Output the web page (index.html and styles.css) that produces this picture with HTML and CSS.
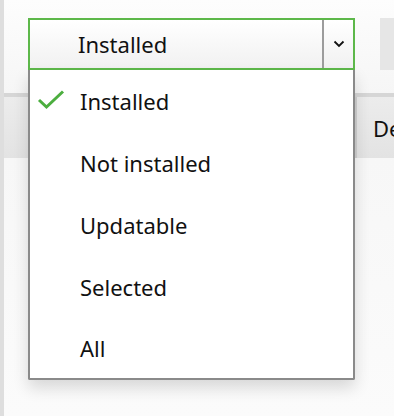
FILE: index.html
```html
<!DOCTYPE html>
<html lang="en">
<head>
  <meta charset="UTF-8">
  <title>Package Filter</title>
  <link rel="stylesheet" href="styles.css">
</head>
<body>
  <div class="sidebar"></div>
  <div class="content">
    <div class="toolbar">
      <div class="filter-select">
        <span class="select-value">Installed</span>
        <span class="select-arrow">
          <svg width="12" height="8" viewBox="0 0 12 8"><path d="M1.5 1.5 L6 6 L10.5 1.5" fill="none" stroke="#111" stroke-width="1.8"/></svg>
        </span>
      </div>
      <div class="toolbar-button"></div>
    </div>
    <div class="table-header">
      <div class="col col-name">Name</div>
      <div class="col col-sort">
        <svg width="16" height="9" viewBox="0 0 16 9"><path d="M1.5 1.5 L8 7.5 L14.5 1.5" fill="none" stroke="#ececec" stroke-width="1.5"/></svg>
      </div>
      <div class="col col-type">T</div>
      <div class="col col-desc">De</div>
    </div>
    <div class="table-body"></div>

    <ul class="menu">
      <li class="menu-item checked">
        <svg class="check" width="28" height="20" viewBox="0 0 28 20"><path d="M2 10 L9.5 17 L26 1.5" fill="none" stroke="#4cae3f" stroke-width="3"/></svg>
        Installed
      </li>
      <li class="menu-item">Not installed</li>
      <li class="menu-item">Updatable</li>
      <li class="menu-item">Selected</li>
      <li class="menu-item">All</li>
    </ul>
  </div>
</body>
</html>
```

FILE: styles.css
```css
body {
  margin: 0;
  width: 394px;
  height: 416px;
  overflow: hidden;
  display: flex;
  font-family: 'Noto Sans', sans-serif;
  color: #111111;
  background-color: #fafafa;
}

.sidebar {
  width: 4px;
  flex-shrink: 0;
  background-color: #dedede;
}

.content {
  flex-grow: 1;
  position: relative;
  display: flex;
  flex-direction: column;
}

.toolbar {
  height: 93px;
  box-sizing: border-box;
  padding: 18px 0 0 24px;
  display: flex;
  align-items: flex-start;
  background: linear-gradient(#fdfdfd, #f6f6f6);
}

.filter-select {
  width: 327px;
  height: 52px;
  box-sizing: border-box;
  border: 2px solid #5db84a;
  display: flex;
  align-items: center;
  background: linear-gradient(#ffffff, #f1f1f1);
}

.select-value {
  flex-grow: 1;
  padding-left: 48px;
  font-size: 22px;
}

.select-arrow {
  width: 29px;
  height: 100%;
  border-left: 2px solid #9c9c9c;
  display: flex;
  align-items: center;
  justify-content: center;
}

.toolbar-button {
  margin-left: 25px;
  width: 20px;
  height: 52px;
  background-color: #e6e6e6;
}

.table-header {
  height: 61px;
  border-top: 4px solid #d6d6d6;
  background: linear-gradient(#ececec, #e3e3e3);
  display: flex;
  align-items: center;
  font-size: 22px;
}

.col {
  box-sizing: border-box;
  flex-shrink: 0;
}

.col-name {
  width: 279px;
  padding-left: 81px;
  color: #ececec;
}

.col-sort {
  width: 42px;
  padding-left: 4px;
  display: flex;
  align-items: center;
}

.col-type {
  width: 30px;
  padding-left: 2px;
  color: #ececec;
}

.col-desc {
  flex-grow: 1;
  padding-left: 16px;
  border-left: 2px solid #d0d0d0;
  height: 100%;
  display: flex;
  align-items: center;
}

.table-body {
  flex-grow: 1;
  background: linear-gradient(#f7f7f7, #fbfbfb);
}

.menu {
  position: absolute;
  top: 70px;
  left: 24px;
  width: 327px;
  box-sizing: border-box;
  margin: 0;
  padding: 0;
  list-style: none;
  background-color: rgba(255, 255, 255, 0.985);
  border: 2px solid #8a8a8a;
  border-top: none;
  border-radius: 0 0 2px 2px;
  box-shadow: 0 8px 16px rgba(0, 0, 0, 0.14);
}

.menu-item {
  height: 62px;
  box-sizing: border-box;
  padding-left: 50px;
  display: flex;
  align-items: center;
  font-size: 22px;
  position: relative;
}

.menu-item:last-child {
  height: 60px;
}

.check {
  position: absolute;
  left: 7px;
  top: 20px;
}
```
